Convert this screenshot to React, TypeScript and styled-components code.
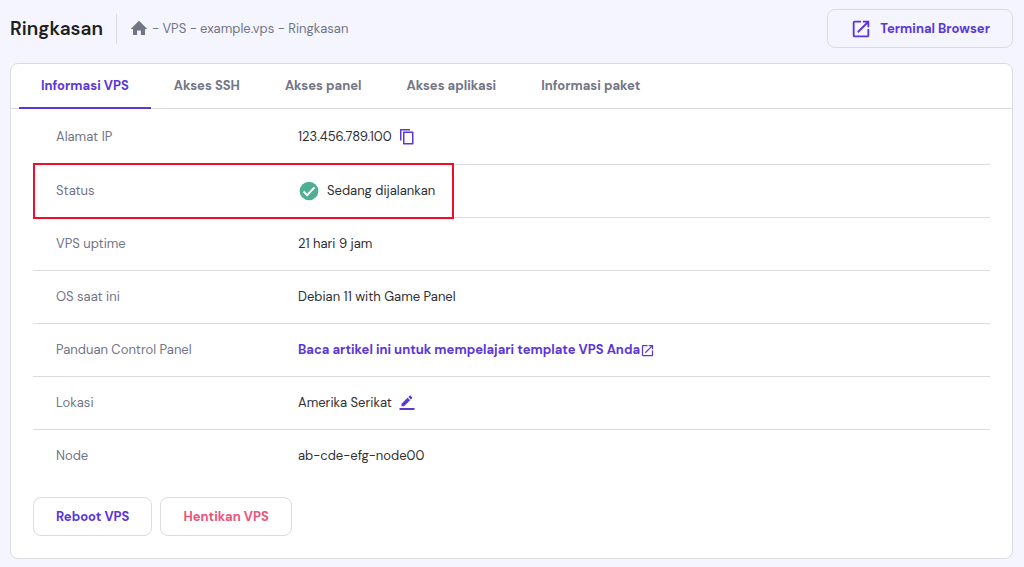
import React, { useState } from "react";
import styled, { createGlobalStyle, css } from "styled-components";

const purple = "#5b36d9";
const grey = "#727586";
const line = "#dadce0";

const GlobalStyle = createGlobalStyle`
  *, *::before, *::after { box-sizing: border-box; }
  body {
    margin: 0;
    background: #f4f5ff;
    color: #2f2f33;
    font-family: "DM Sans", Inter, "Liberation Sans", sans-serif;
    font-size: 13px;
    line-height: 20px;
  }
  button { font: inherit; cursor: pointer; }
`;

const Page = styled.div`
  padding: 9px 11px 8px 10px;
`;

const Header = styled.header`
  display: flex;
  align-items: center;
  height: 39px;
  margin-bottom: 15px;
`;

const Title = styled.h1`
  margin: 0;
  font-size: 19px;
  line-height: 24px;
  font-weight: 600;
  color: #1d1e20;
`;

const Crumbs = styled.nav`
  display: flex;
  align-items: center;
  gap: 4px;
  height: 30px;
  margin-left: 13px;
  padding-left: 13px;
  border-left: 1px solid ${line};
  color: ${grey};
  white-space: nowrap;
`;

const HomeLink = styled.a`
  display: flex;
  color: inherit;
`;

const Button = styled.button<{ $tone?: "danger"; $end?: boolean }>`
  display: flex;
  align-items: center;
  justify-content: center;
  gap: 8px;
  height: 39px;
  margin-left: ${(p) => (p.$end ? "auto" : "0")};
  padding: 0 22px;
  border: 1px solid ${line};
  border-radius: 8px;
  background: transparent;
  color: ${(p) => (p.$tone === "danger" ? "#e8567d" : purple)};
  && { font-weight: 700; }
`;

const Card = styled.main`
  border: 1px solid ${line};
  border-radius: 8px;
  background: #fff;
`;

const Tabs = styled.div`
  display: flex;
  gap: 1px;
  padding: 0 8px;
  border-bottom: 1px solid ${line};
`;

const Tab = styled.button<{ $active: boolean }>`
  height: 45px;
  margin-bottom: -1px;
  padding: 0 22px;
  border: 0;
  border-bottom: 2px solid ${(p) => (p.$active ? purple : "transparent")};
  background: transparent;
  color: ${(p) => (p.$active ? purple : grey)};
  && { font-weight: 700; }
`;

const Body = styled.div`
  padding: 2px 22px 22px;
`;

const Details = styled.table`
  width: 100%;
  border-collapse: separate;
  border-spacing: 0;
`;

const Label = styled.th`
  width: 265px;
  height: 53px;
  padding: 0 23px;
  color: ${grey};
  font-weight: 400;
  text-align: left;
`;

const Value = styled.td`
  padding: 0;
`;

const Row = styled.tr<{ $marked?: boolean }>`
  position: relative;

  & > * { border-bottom: 1px solid ${line}; }
  &:first-child > * { height: 54px; padding-bottom: 2px; }
  &:last-child > * { border-bottom: 0; padding-bottom: 2px; }

  ${(p) =>
    p.$marked &&
    css`
      &::after {
        content: "";
        position: absolute;
        top: -2px;
        bottom: -1px;
        left: 0;
        width: 44%;
        border: 2px solid #f20d2d;
        pointer-events: none;
      }
    `}
`;

const Inline = styled.div`
  display: flex;
  align-items: center;
  gap: 7px;
`;

const IconButton = styled.button`
  display: flex;
  padding: 0;
  border: 0;
  background: none;
  color: ${purple};
`;

const GuideLink = styled.a`
  display: inline-flex;
  align-items: center;
  color: ${purple};
  font-weight: 700;
  text-decoration: none;
`;

const Actions = styled.div`
  display: flex;
  gap: 8px;
  margin-top: 14px;
`;

const HomeIcon = () => (
  <svg width="18" height="18" viewBox="0 0 24 24" fill="currentColor" aria-hidden="true">
    <path d="M9.500 20v-6h5v6H20v-8h3L12 1 1 12h3v8z" />
  </svg>
);

const OpenIcon = ({ size }: { size: number }) => (
  <svg width={size} height={size} viewBox="0 0 24 24" fill="currentColor" aria-hidden="true">
    <path d="M19 19H5V5h7V3H5a2 2 0 0 0-2 2v14a2 2 0 0 0 2 2h14c1.100 0 2-.9 2-2v-7h-2v7zM14 3v2h3.590l-9.830 9.830 1.410 1.410L19 6.410V10h2V3h-7z" />
  </svg>
);

const CopyIcon = () => (
  <svg width="16" height="17" viewBox="0 0 16 17" fill="none" stroke="currentColor" strokeWidth="1.500" aria-hidden="true">
    <path d="M1.750 12.500V1.750H11" strokeLinejoin="round" />
    <path d="M4.750 4.250h9v11.500h-9z" strokeLinejoin="round" />
  </svg>
);

const CheckIcon = () => (
  <svg width="22" height="22" viewBox="0 0 24 24" aria-hidden="true">
    <circle cx="12" cy="12" r="10.200" fill="#4fae94" />
    <path d="M6 12.500l4 4 8-8.500" fill="none" stroke="#fff" strokeWidth="2.200" />
  </svg>
);

const EditIcon = () => (
  <svg width="16" height="18" viewBox="0 0 16 18" fill="currentColor" aria-hidden="true">
    <path d="M2.500 9.800v2.500h2.500l6.100-6.100-2.500-2.500zM9.400 2.900l2.500 2.500 1.200-1.200a.7.7 0 0 0 0-1l-1.500-1.500a.7.7 0 0 0-1 0z" />
    <path d="M.5 14h15v2H.5z" />
  </svg>
);

const tabNames = ["Informasi VPS", "Akses SSH", "Akses panel", "Akses aplikasi", "Informasi paket"];

export default function App() {
  const [active, setActive] = useState(0);

  return (
    <>
      <GlobalStyle />
      <Page>
        <Header>
          <Title>Ringkasan</Title>
          <Crumbs aria-label="Breadcrumb">
            <HomeLink href="#" aria-label="Beranda">
              <HomeIcon />
            </HomeLink>
            <span>- VPS - example.vps - Ringkasan</span>
          </Crumbs>
          <Button type="button" $end>
            <OpenIcon size={22} />
            Terminal Browser
          </Button>
        </Header>

        <Card>
          <Tabs role="tablist">
            {tabNames.map((name, i) => (
              <Tab
                key={name}
                type="button"
                role="tab"
                aria-selected={i === active}
                $active={i === active}
                onClick={() => setActive(i)}
              >
                {name}
              </Tab>
            ))}
          </Tabs>

          <Body>
            <Details>
              <tbody>
                <Row>
                  <Label scope="row">Alamat IP</Label>
                  <Value>
                    <Inline>
                      123.456.789.100
                      <IconButton type="button" aria-label="Salin">
                        <CopyIcon />
                      </IconButton>
                    </Inline>
                  </Value>
                </Row>
                <Row $marked>
                  <Label scope="row">Status</Label>
                  <Value>
                    <Inline>
                      <CheckIcon />
                      Sedang dijalankan
                    </Inline>
                  </Value>
                </Row>
                <Row>
                  <Label scope="row">VPS uptime</Label>
                  <Value>21 hari 9 jam</Value>
                </Row>
                <Row>
                  <Label scope="row">OS saat ini</Label>
                  <Value>Debian 11 with Game Panel</Value>
                </Row>
                <Row>
                  <Label scope="row">Panduan Control Panel</Label>
                  <Value>
                    <GuideLink href="#">
                      Baca artikel ini untuk mempelajari template VPS Anda
                      <OpenIcon size={15} />
                    </GuideLink>
                  </Value>
                </Row>
                <Row>
                  <Label scope="row">Lokasi</Label>
                  <Value>
                    <Inline>
                      Amerika Serikat
                      <IconButton type="button" aria-label="Ubah lokasi">
                        <EditIcon />
                      </IconButton>
                    </Inline>
                  </Value>
                </Row>
                <Row>
                  <Label scope="row">Node</Label>
                  <Value>ab-cde-efg-node00</Value>
                </Row>
              </tbody>
            </Details>

            <Actions>
              <Button type="button">Reboot VPS</Button>
              <Button type="button" $tone="danger">
                Hentikan VPS
              </Button>
            </Actions>
          </Body>
        </Card>
      </Page>
    </>
  );
}
